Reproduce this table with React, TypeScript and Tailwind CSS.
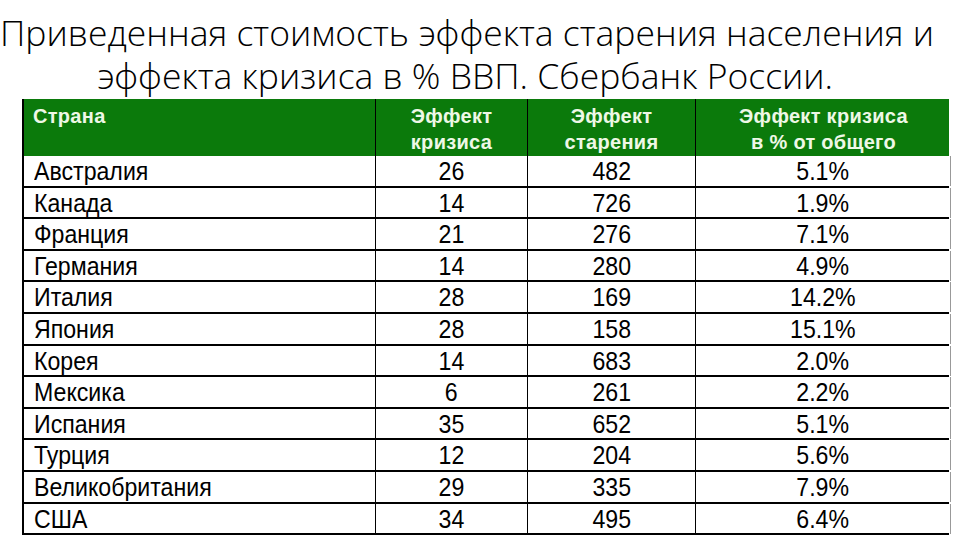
const rows: [string, string, string, string][] = [
  ["Австралия", "26", "482", "5.1%"],
  ["Канада", "14", "726", "1.9%"],
  ["Франция", "21", "276", "7.1%"],
  ["Германия", "14", "280", "4.9%"],
  ["Италия", "28", "169", "14.2%"],
  ["Япония", "28", "158", "15.1%"],
  ["Корея", "14", "683", "2.0%"],
  ["Мексика", "6", "261", "2.2%"],
  ["Испания", "35", "652", "5.1%"],
  ["Турция", "12", "204", "5.6%"],
  ["Великобритания", "29", "335", "7.9%"],
  ["США", "34", "495", "6.4%"],
];

export default function App() {
  return (
    <div className="w-[960px] h-[540px] bg-white overflow-hidden">
      <h1 className="pt-[11px] pr-[30px] text-center text-[35.5px] leading-[43px] font-light text-black font-['Open_Sans',sans-serif] whitespace-nowrap">
        Приведенная стоимость эффекта старения населения и
        <br />
        эффекта кризиса в % ВВП. Сбербанк России.
      </h1>

      <div className="ml-[22px] mt-[2px] w-[927px] border-l-2 border-black font-['Liberation_Sans',sans-serif]">
        <div className="grid grid-cols-[352px_152px_168px_255px] h-[57px] bg-[#0b7a0b] text-[#eef8e6] font-bold text-[20px] leading-[26px] tracking-[0.3px]">
          <div className="pl-[9px] pt-[4px] border-r border-black">Страна</div>
          <div className="pt-[4px] text-center border-r border-black">
            Эффект
            <br />
            кризиса
          </div>
          <div className="pt-[4px] text-center border-r border-black">
            Эффект
            <br />
            старения
          </div>
          <div className="pt-[4px] text-center">
            Эффект кризиса
            <br />в % от общего
          </div>
        </div>
        {rows.map((r) => (
          <div
            key={r[0]}
            className="grid grid-cols-[352px_152px_168px_255px] h-[31.6px] border-b-2 border-black text-black text-[26px] leading-[30px]"
          >
            <div className="pl-[10px] border-r border-black">
              <span className="inline-block origin-left scale-x-[0.89]">{r[0]}</span>
            </div>
            <div className="text-center border-r border-black">
              <span className="inline-block scale-x-[0.89]">{r[1]}</span>
            </div>
            <div className="text-center border-r border-black">
              <span className="inline-block scale-x-[0.89]">{r[2]}</span>
            </div>
            <div className="text-center border-r border-[#999]">
              <span className="inline-block scale-x-[0.89]">{r[3]}</span>
            </div>
          </div>
        ))}
      </div>
    </div>
  );
}
